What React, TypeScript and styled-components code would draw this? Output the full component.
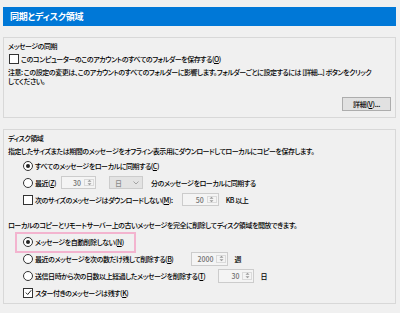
import React from "react";
import styled, { createGlobalStyle } from "styled-components";

const Global = createGlobalStyle`
  html, body {
    margin: 0;
    padding: 0;
    background: #f0f0f0;
  }
  body {
    font-family: "Noto Sans CJK JP", "Noto Sans", sans-serif;
    font-feature-settings: "palt";
    color: #000;
  }
`;

const Page = styled.div`
  width: 400px;
  height: 313px;
  box-sizing: border-box;
  padding: 7px 4px 0 3px;
  font-size: 7px;
  font-weight: 500;
  letter-spacing: -0.45px;
`;

const Header = styled.div`
  height: 19px;
  line-height: 19px;
  background: #0078d7;
  color: #fff;
  font-weight: bold;
  font-size: 9px;
  letter-spacing: -0.2px;
  padding-left: 7px;
`;

const Group = styled.section`
  margin-top: 11px;
  border: 1px solid #d8d8d8;
  padding: 2px 4px 2px 4px;
`;

const GroupTitle = styled.div`
  line-height: 12px;
`;

const Line = styled.div<{ $mt?: number }>`
  line-height: 10px;
  margin-top: ${(p) => p.$mt ?? 0}px;
  white-space: nowrap;
`;

const Note = styled.div`
  line-height: 9px;
  margin-top: 2px;
  white-space: nowrap;
`;

const Row = styled.div<{ $indent?: number; $h?: number }>`
  display: flex;
  align-items: center;
  height: ${(p) => p.$h ?? 17}px;
  padding-left: ${(p) => p.$indent ?? 15}px;
  white-space: nowrap;
  position: relative;
`;

const Highlight = styled.div`
  position: absolute;
  left: 7px;
  top: -1px;
  width: 117px;
  height: 17px;
  border: 2px solid #f3b4cf;
  pointer-events: none;
`;

const Box = styled.span`
  width: 8px;
  height: 8px;
  border: 1px solid #333;
  background: #fff;
  flex: none;
  margin-right: 2px;
  display: inline-flex;
  align-items: center;
  justify-content: center;
`;

const Radio = styled.span<{ $on?: boolean }>`
  width: 8px;
  height: 8px;
  border: 1px solid #333;
  border-radius: 50%;
  background: #fff;
  flex: none;
  margin-right: 2px;
  display: inline-flex;
  align-items: center;
  justify-content: center;
  &::after {
    content: "";
    display: ${(p) => (p.$on ? "block" : "none")};
    width: 4px;
    height: 4px;
    border-radius: 50%;
    background: #222;
  }
`;

const Gap = styled.span<{ $w: number }>`
  display: inline-block;
  width: ${(p) => p.$w}px;
  flex: none;
`;

const SpinBox = styled.span<{ $w: number; $h: number }>`
  display: inline-flex;
  width: ${(p) => p.$w}px;
  height: ${(p) => p.$h}px;
  box-sizing: border-box;
  border: 1px solid #cccccc;
  background: #f4f4f4;
  color: #707070;
  flex: none;
`;

const SpinValue = styled.span`
  flex: 1;
  padding-right: 3px;
  display: flex;
  align-items: center;
  justify-content: flex-end;
  letter-spacing: 0;
`;

const SpinArrows = styled.span`
  width: 8px;
  display: flex;
  align-items: center;
  justify-content: center;
  margin: 2px 1px 2px 0;
  border: 1px solid #dadada;
`;

const Select = styled.span`
  display: inline-flex;
  align-items: center;
  justify-content: space-between;
  width: 34px;
  height: 13px;
  box-sizing: border-box;
  border: 1px solid #cccccc;
  background: #e3e3e3;
  color: #8a8a8a;
  padding: 0 3px 0 5px;
  flex: none;
`;

const Button = styled.button`
  width: 49px;
  height: 14px;
  padding: 0;
  border: 1px solid #adadad;
  background: #e1e1e1;
  font-family: inherit;
  font-feature-settings: "palt";
  font-size: 7px;
  font-weight: 500;
  letter-spacing: -0.3px;
  color: #000;
`;

const ButtonRow = styled.div`
  display: flex;
  justify-content: flex-end;
  margin-top: 11px;
  margin-bottom: 4px;
`;

function Check({ checked }: { checked?: boolean }) {
  return (
    <Box>
      {checked && (
        <svg width="7" height="7" viewBox="0 0 7 7">
          <path d="M0.8 3.6 L2.7 5.5 L6.2 1.3" fill="none" stroke="#222" strokeWidth="1" />
        </svg>
      )}
    </Box>
  );
}

function Spinner({ value, w = 36, h = 13 }: { value: string; w?: number; h?: number }) {
  return (
    <SpinBox $w={w} $h={h}>
      <SpinValue>{value}</SpinValue>
      <SpinArrows>
        <svg width="5" height="7" viewBox="0 0 5 7">
          <path d="M0.5 2.8 L2.5 0.8 L4.5 2.8 Z" fill="#9a9a9a" />
          <path d="M0.5 4.2 L2.5 6.2 L4.5 4.2 Z" fill="#9a9a9a" />
        </svg>
      </SpinArrows>
    </SpinBox>
  );
}

export default function App() {
  return (
    <>
      <Global />
      <Page>
        <Header>同期とディスク領域</Header>

        <Group>
          <GroupTitle>メッセージの同期</GroupTitle>
          <Row $indent={1} $h={14}>
            <Check />
            このコンピューターのこのアカウントのすべてのフォルダーを保存する(<u>O</u>)
          </Row>
          <Note>
            注意: この設定の変更は、このアカウントのすべてのフォルダーに影響します。フォルダーごとに設定するには [詳細...] ボタンをクリック
            <br />
            してください。
          </Note>
          <ButtonRow>
            <Button>
              詳細(<u>V</u>)...
            </Button>
          </ButtonRow>
        </Group>

        <Group>
          <GroupTitle>ディスク領域</GroupTitle>
          <Line $mt={2}>
            指定したサイズまたは期間のメッセージをオフライン表示用にダウンロードしてローカルにコピーを保存します。
          </Line>
          <Row style={{ marginTop: 1 }}>
            <Radio $on />
            すべてのメッセージをローカルに同期する(<u>C</u>)
          </Row>
          <Row>
            <Radio />
            最近(<u>Z</u>)
            <Gap $w={5} />
            <Spinner value="30" w={35} />
            <Gap $w={13} />
            <Select>
              日
              <svg width="6" height="4" viewBox="0 0 6 4">
                <path d="M0.5 0.5 L3 3 L5.5 0.5" fill="none" stroke="#9a9a9a" strokeWidth="0.9" />
              </svg>
            </Select>
            <Gap $w={8} />
            分のメッセージをローカルに同期する
          </Row>
          <Row>
            <Check />
            次のサイズのメッセージはダウンロードしない(<u>M</u>):
            <Gap $w={9} />
            <Spinner value="50" w={37} />
            <Gap $w={7} />
            KB 以上
          </Row>

          <Line $mt={12}>
            ローカルのコピーとリモートサーバー上の古いメッセージを完全に削除してディスク領域を開放できます。
          </Line>
          <Row style={{ marginTop: 3 }}>
            <Highlight />
            <Radio $on />
            メッセージを自動削除しない(<u>N</u>)
          </Row>
          <Row>
            <Radio />
            最近のメッセージを次の数だけ残して削除する(<u>B</u>)
            <Gap $w={18} />
            <Spinner value="2000" w={37} h={14} />
            <Gap $w={6} />週
          </Row>
          <Row>
            <Radio />
            送信日時から次の日数以上経過したメッセージを削除する(<u>T</u>)
            <Gap $w={13} />
            <Spinner value="30" w={36} h={14} />
            <Gap $w={6} />日
          </Row>
          <Row>
            <Check checked />
            スター付きのメッセージは残す(<u>K</u>)
          </Row>
        </Group>
      </Page>
    </>
  );
}
